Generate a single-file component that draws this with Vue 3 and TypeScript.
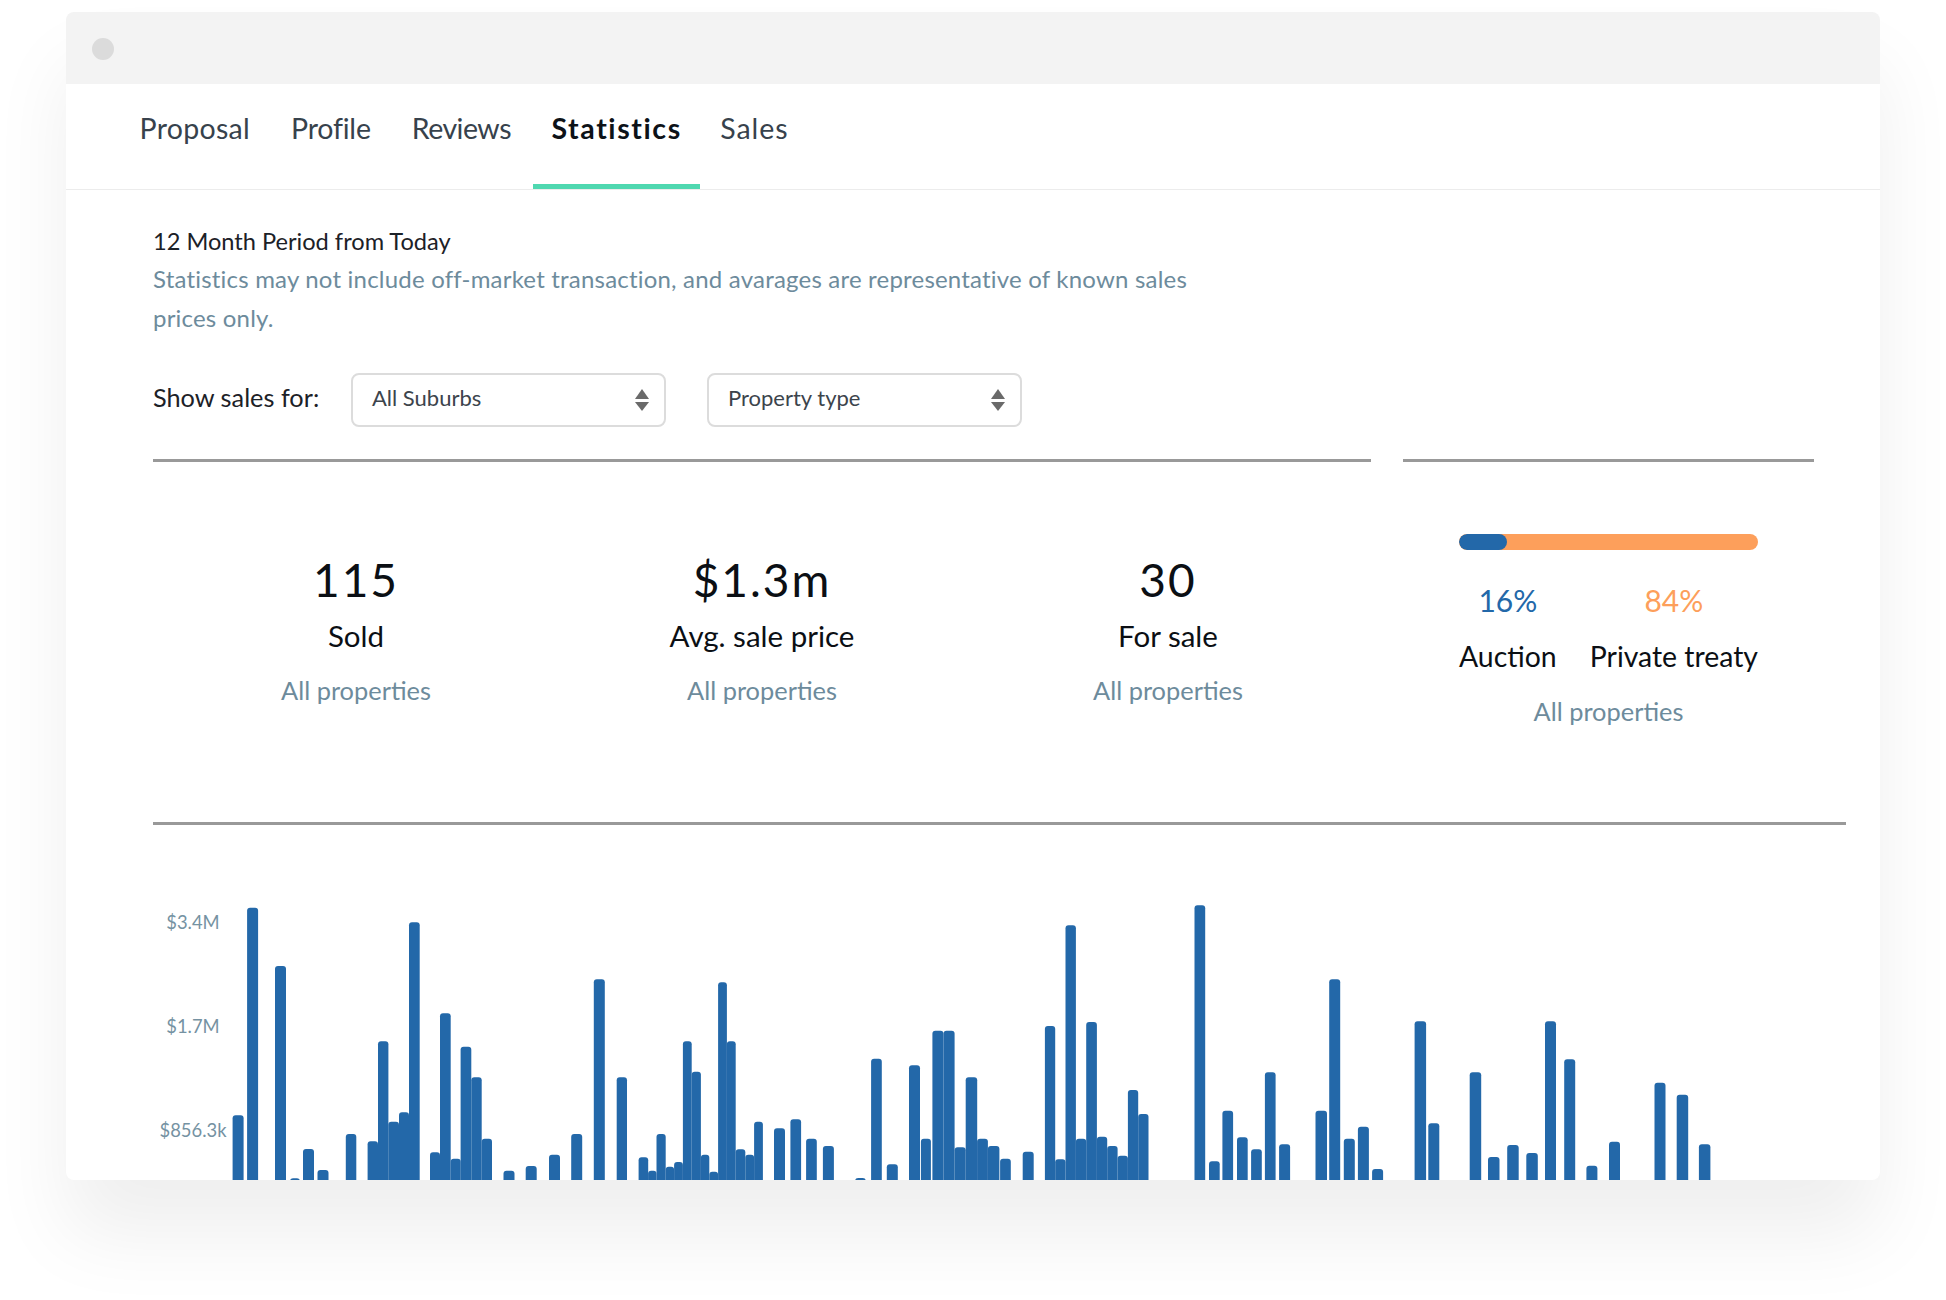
<template>
  <div class="page">
    <div class="window">
      <div class="titlebar"><span class="dot"></span></div>
      <nav class="tabs">
        <a v-for="tab in tabs" :key="tab" class="tab" :class="{ active: tab === 'Statistics' }">{{ tab }}</a>
      </nav>
      <section class="content">
        <h2 class="period">12 Month Period from Today</h2>
        <p class="note">Statistics may not include off-market transaction, and avarages are representative of known sales prices only.</p>
        <div class="filters">
          <span class="filters-label">Show sales for:</span>
          <div v-for="f in filters" :key="f" class="select">
            <span>{{ f }}</span>
            <svg class="arrows" width="16" height="24" viewBox="0 0 16 24">
              <path d="M8 1 L15 11 H1 Z" fill="#6a6a6a" />
              <path d="M1 14 H15 L8 23 Z" fill="#6a6a6a" />
            </svg>
          </div>
        </div>
        <div class="summary">
          <div class="stats">
            <div v-for="s in stats" :key="s.label" class="stat">
              <div class="stat-value">{{ s.value }}</div>
              <div class="stat-label">{{ s.label }}</div>
              <div class="muted">All properties</div>
            </div>
          </div>
          <div class="split">
            <div class="split-inner">
              <div class="split-bar"><div class="split-fill"></div></div>
              <div class="split-cols">
                <div class="split-col">
                  <div class="pct blue">16%</div>
                  <div class="split-label">Auction</div>
                </div>
                <div class="split-col">
                  <div class="pct orange">84%</div>
                  <div class="split-label">Private treaty</div>
                </div>
              </div>
            </div>
            <div class="muted split-note">All properties</div>
          </div>
        </div>
      </section>
      <svg class="chart" width="1814" height="355" viewBox="0 0 1814 355">
        <text v-for="l in yLabels" :key="l.text" class="y-label" :x="127" :y="l.y" text-anchor="middle">{{ l.text }}</text>
        <rect v-for="(b, i) in bars" :key="i" :x="b[0] - 66" :y="355 - b[2]" :width="b[1]" :height="b[2] + 5" rx="3" fill="#2368a9" />
      </svg>
    </div>
  </div>
</template>

<script setup lang="ts">
const tabs = ['Proposal', 'Profile', 'Reviews', 'Statistics', 'Sales']
const filters = ['All Suburbs', 'Property type']

const stats = [
  { value: '115', label: 'Sold' },
  { value: '$1.3m', label: 'Avg. sale price' },
  { value: '30', label: 'For sale' },
]

const yLabels = [
  { text: '$3.4M', y: 99 },
  { text: '$1.7M', y: 203 },
  { text: '$856.3k', y: 307 },
]

// x, width, height
const bars: [number, number, number][] = [
  [232.6, 11, 64.7], [247.1, 11, 272.3], [275, 11, 214], [290, 10, 1.7], [303, 11, 31], [317.5, 11, 10],
  [345.8, 10.5, 46], [367.6, 10.4, 38.7], [378, 10.4, 138.7], [388.3, 10.7, 58.3], [399, 10, 67.7], [409, 10.7, 257.7],
  [430, 10, 27.7], [440, 10.7, 166.7], [450.7, 10, 21.3], [460.6, 10.7, 133.3], [471.3, 10.4, 102.7], [481.7, 10.3, 41.3],
  [503.5, 11, 9.3], [525.7, 11, 14], [549, 11, 25.3], [571.2, 11, 46], [593.8, 11, 200.7], [616.7, 10.3, 102.7],
  [638.6, 9.6, 22.7], [648.1, 8.4, 9.3], [656.5, 9.2, 46], [665.7, 8.4, 13.3], [674.1, 8.8, 18], [682.9, 8.8, 138.7],
  [691.7, 9.2, 108.3], [700.9, 8.4, 25.3], [709.3, 8.8, 8.3], [718.1, 8.8, 197.7], [726.9, 8.8, 138.7], [735.7, 9.6, 30.7],
  [745.3, 8.8, 25.3], [754.1, 8.8, 58.3], [774, 11, 51.7], [790.4, 10.7, 60.7], [806.1, 10.7, 41.3], [822.9, 11, 34],
  [855.1, 10.7, 2], [871.1, 10.7, 121.3], [886.8, 11, 15.7], [909, 11, 114.7], [920.9, 10, 41.3], [932.4, 11.1, 149.3],
  [943.5, 11.1, 149.3], [954.6, 11.1, 32.7], [965.7, 11.5, 102.7], [977.1, 10.8, 41.3], [987.9, 11.5, 34], [1000.1, 10.7, 21.3],
  [1022.7, 11, 28.3], [1044.9, 10.3, 154], [1055.2, 10.3, 20.7], [1065.5, 10.4, 254.7], [1075.9, 10.3, 41.3], [1086.2, 10.7, 158],
  [1096.9, 10.3, 43.3], [1107.2, 10.4, 34], [1117.6, 10.3, 24.3], [1127.9, 10.3, 90], [1138.2, 10.3, 66],
  [1194.5, 10.7, 274.7], [1209, 10.7, 18.7], [1222.4, 10.7, 69.3], [1237, 10.7, 42.7], [1251.1, 10.7, 30.7], [1264.9, 10.7, 107.7],
  [1279.1, 11, 35.7], [1315.5, 11.5, 69.3], [1329.2, 11, 200.7], [1343.8, 11, 41.3], [1357.9, 11, 53.3], [1372.1, 11, 11],
  [1414.6, 11.5, 158.7], [1428.3, 11, 56.7], [1469.7, 11.5, 107.7], [1488, 11.5, 23], [1507.2, 11.5, 35], [1526.3, 11.5, 27],
  [1545, 11, 158.7], [1564.2, 11, 120.7], [1586.4, 11, 14.3], [1609, 11, 38.3], [1654.5, 11, 97.3], [1676.7, 11.5, 85.3],
  [1698.9, 11.5, 35.7],
]
</script>

<style>
html,
body {
  background: #fff;
}
</style>

<style scoped>
.page {
  height: 1300px;
  padding: 12px 0 0 66px;
  box-sizing: border-box;
  font-family: Lato, "Open Sans", sans-serif;
  overflow: hidden;
}

.window {
  width: 1814px;
  height: 1168px;
  background: #fff;
  border-radius: 8px;
  overflow: hidden;
  box-shadow: 0 55px 80px rgba(0, 0, 0, 0.065);
  display: flex;
  flex-direction: column;
}

.titlebar {
  height: 72px;
  flex: none;
  background: #f3f3f3;
  display: flex;
  align-items: center;
  padding-left: 26px;
}

.dot {
  width: 22px;
  height: 22px;
  margin-top: 2px;
  border-radius: 50%;
  background: #dbdbdb;
}

.tabs {
  height: 106px;
  flex: none;
  box-sizing: border-box;
  display: flex;
  padding-left: 53px;
  border-bottom: 1px solid #ececec;
}

.tab {
  height: 105px;
  box-sizing: border-box;
  padding: 26px 20.5px 0;
  font-size: 28.5px;
  line-height: 36px;
  color: #37424c;
  border-bottom: 5px solid transparent;
}

.tab:nth-child(1) {
  letter-spacing: 0.3px;
}

.tab:nth-child(2) {
  letter-spacing: -0.2px;
}

.tab:nth-child(3) {
  letter-spacing: -0.5px;
}

.tab:nth-child(5) {
  letter-spacing: 0.9px;
}

.tab.active {
  margin-left: 2px;
  padding: 26px 18px 0;
  color: #0d1218;
  font-weight: 700;
  letter-spacing: 1.6px;
  border-bottom-color: #4fd8b0;
}

.content {
  padding: 32px 34px 0 87px;
  flex: none;
}

.period {
  margin: 0;
  font-size: 23.6px;
  line-height: 38px;
  font-weight: 400;
  color: #1c2127;
}

.note {
  margin: 0;
  width: 1040px;
  font-size: 24px;
  line-height: 38.5px;
  letter-spacing: 0.2px;
  color: #6d8b9c;
}

.filters {
  display: flex;
  align-items: center;
  margin-top: 36px;
}

.filters-label {
  width: 166px;
  margin: 0 32px 6px 0;
  font-size: 25.3px;
  white-space: nowrap;
  color: #1c2127;
}

.select {
  width: 315px;
  height: 54px;
  box-sizing: border-box;
  margin-right: 41px;
  padding: 0 14px 0 19px;
  border: 2px solid #dcdcdc;
  border-radius: 8px;
  display: flex;
  align-items: center;
  justify-content: space-between;
  font-size: 22px;
  color: #3c444c;
}

.select span {
  margin-bottom: 6px;
}

.summary {
  display: flex;
  gap: 32px;
  margin-top: 32px;
  height: 363px;
  border-bottom: 3px solid #999;
}

.stats {
  width: 1218px;
  height: 363px;
  flex: none;
  box-sizing: border-box;
  border-top: 3px solid #999;
  display: grid;
  grid-template-columns: repeat(3, 1fr);
  padding-top: 91px;
}

.stat {
  text-align: center;
}

.stat-value {
  font-size: 46px;
  line-height: 54px;
  color: #0b0f14;
  letter-spacing: 2px;
}

.stat-label {
  font-size: 29.5px;
  line-height: 36px;
  margin-top: 11px;
  color: #0b0f14;
}

.muted {
  font-size: 25.4px;
  line-height: 36px;
  margin-top: 18px;
  color: #6d8b9c;
}

.split {
  width: 411px;
  height: 363px;
  flex: none;
  box-sizing: border-box;
  border-top: 3px solid #999;
  padding-top: 72px;
  text-align: center;
}

.split-inner {
  width: 299px;
  margin: 0 auto;
}

.split-bar {
  height: 16px;
  border-radius: 8px;
  background: #fd9f5b;
  overflow: hidden;
}

.split-fill {
  width: 16%;
  height: 100%;
  border-radius: 8px;
  background: #2368a9;
}

.split-cols {
  display: flex;
  justify-content: space-between;
  margin-top: 32px;
}

.pct {
  font-size: 30px;
  line-height: 36px;
}

.blue {
  color: #2368a9;
}

.orange {
  color: #fd9f5b;
}

.split-label {
  font-size: 28.4px;
  line-height: 36px;
  margin-top: 20px;
  color: #0b0f14;
  white-space: nowrap;
}

.split-note {
  margin-top: 19px;
}

.chart {
  display: block;
  flex: none;
}

.y-label {
  font-size: 18.4px;
  fill: #7592a2;
  dominant-baseline: middle;
}
</style>
